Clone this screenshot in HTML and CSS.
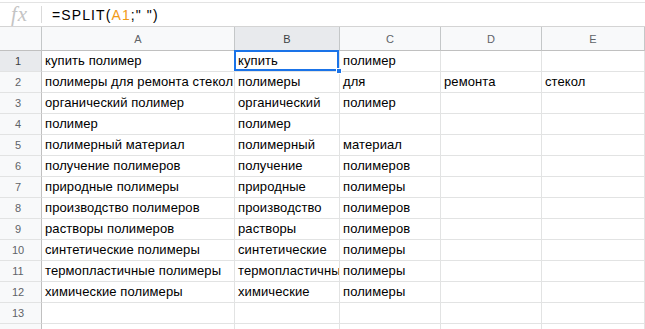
FILE: index.html
```html
<!DOCTYPE html>
<html lang="ru">

<head>
    <meta charset="UTF-8">
    <meta name="viewport" content="width=device-width, initial-scale=1.0">
    <title>SPLIT</title>
    <link rel="stylesheet" href="styles.css">
</head>

<body>
    <div class="formula-bar">
        <span class="fx">fx</span>
        <span class="sep"></span>
        <span class="formula">=SPLIT(<span class="ref">A1</span>;"&nbsp;")</span>
    </div>

    <div class="sheet">
        <div class="corner"></div>
        <div class="col-head">A</div>
        <div class="col-head active">B</div>
        <div class="col-head">C</div>
        <div class="col-head">D</div>
        <div class="col-head">E</div>

        <div class="row-head active">1</div>
        <div class="cell">купить полимер</div>
        <div class="cell selected">купить<span class="handle"></span></div>
        <div class="cell">полимер</div>
        <div class="cell"></div>
        <div class="cell"></div>

        <div class="row-head">2</div>
        <div class="cell">полимеры для ремонта стекол</div>
        <div class="cell">полимеры</div>
        <div class="cell">для</div>
        <div class="cell">ремонта</div>
        <div class="cell">стекол</div>

        <div class="row-head">3</div>
        <div class="cell">органический полимер</div>
        <div class="cell">органический</div>
        <div class="cell">полимер</div>
        <div class="cell"></div>
        <div class="cell"></div>

        <div class="row-head">4</div>
        <div class="cell">полимер</div>
        <div class="cell">полимер</div>
        <div class="cell"></div>
        <div class="cell"></div>
        <div class="cell"></div>

        <div class="row-head">5</div>
        <div class="cell">полимерный материал</div>
        <div class="cell">полимерный</div>
        <div class="cell">материал</div>
        <div class="cell"></div>
        <div class="cell"></div>

        <div class="row-head">6</div>
        <div class="cell">получение полимеров</div>
        <div class="cell">получение</div>
        <div class="cell">полимеров</div>
        <div class="cell"></div>
        <div class="cell"></div>

        <div class="row-head">7</div>
        <div class="cell">природные полимеры</div>
        <div class="cell">природные</div>
        <div class="cell">полимеры</div>
        <div class="cell"></div>
        <div class="cell"></div>

        <div class="row-head">8</div>
        <div class="cell">производство полимеров</div>
        <div class="cell">производство</div>
        <div class="cell">полимеров</div>
        <div class="cell"></div>
        <div class="cell"></div>

        <div class="row-head">9</div>
        <div class="cell">растворы полимеров</div>
        <div class="cell">растворы</div>
        <div class="cell">полимеров</div>
        <div class="cell"></div>
        <div class="cell"></div>

        <div class="row-head">10</div>
        <div class="cell">синтетические полимеры</div>
        <div class="cell">синтетические</div>
        <div class="cell">полимеры</div>
        <div class="cell"></div>
        <div class="cell"></div>

        <div class="row-head">11</div>
        <div class="cell">термопластичные полимеры</div>
        <div class="cell">термопластичные</div>
        <div class="cell">полимеры</div>
        <div class="cell"></div>
        <div class="cell"></div>

        <div class="row-head">12</div>
        <div class="cell">химические полимеры</div>
        <div class="cell">химические</div>
        <div class="cell">полимеры</div>
        <div class="cell"></div>
        <div class="cell"></div>

        <div class="row-head">13</div>
        <div class="cell"></div>
        <div class="cell"></div>
        <div class="cell"></div>
        <div class="cell"></div>
        <div class="cell"></div>

        <div class="row-head"></div>
        <div class="cell"></div>
        <div class="cell"></div>
        <div class="cell"></div>
        <div class="cell"></div>
        <div class="cell"></div>
    </div>
</body>

</html>
```

FILE: styles.css
```css
* {
    margin: 0;
    padding: 0;
    box-sizing: border-box;
}

body {
    background-color: #fff;
    font-family: "Liberation Sans", Arial, sans-serif;
    color: #000;
    overflow: hidden;
}

.formula-bar {
    display: flex;
    align-items: center;
    height: 25px;
    margin-top: 2px;
    border-top: 1px solid #e3e3e3;
    border-bottom: 1px solid #d4d4d4;
}

.fx {
    width: 41px;
    padding-left: 11px;
    font-family: "Liberation Serif", serif;
    font-style: italic;
    font-size: 21px;
    color: #c4c4c4;
    letter-spacing: 1px;
}

.sep {
    width: 1px;
    height: 17px;
    background-color: #dadada;
}

.formula {
    padding-left: 10px;
    font-size: 14px;
    letter-spacing: 1.1px;
    white-space: pre;
}

.ref {
    color: #f19a16;
}

.sheet {
    display: grid;
    grid-template-columns: 42px 193px 105px 101px 101px 1fr;
    grid-template-rows: 24px;
    grid-auto-rows: 21px;
}

.corner,
.col-head,
.row-head {
    background-color: #f8f9fa;
    color: #5f6368;
    font-size: 11px;
    display: flex;
    align-items: center;
    justify-content: center;
}

.corner,
.col-head {
    border-right: 1px solid #c4c7c8;
    border-bottom: 1px solid #c0c0c0;
}

.col-head {
    padding-top: 1px;
}

.row-head {
    border-right: 1px solid #c0c0c0;
    border-bottom: 1px solid #e2e3e3;
    padding-right: 5px;
}

.active {
    background-color: #e8eaed;
    color: #3c4043;
}

.cell {
    border-right: 1px solid #e2e3e3;
    border-bottom: 1px solid #e2e3e3;
    padding: 0 3px;
    font-size: 13px;
    line-height: 20px;
    letter-spacing: 0.1px;
    white-space: nowrap;
    overflow: hidden;
}

.selected {
    position: relative;
    overflow: visible;
}

.selected::after {
    content: "";
    position: absolute;
    top: -1px;
    left: -1px;
    right: 0;
    bottom: 0;
    border: 2px solid #1a73e8;
}

.handle {
    position: absolute;
    right: -3px;
    bottom: -3px;
    width: 6px;
    height: 6px;
    background-color: #1a73e8;
    border: 1px solid #fff;
    z-index: 1;
}
```
